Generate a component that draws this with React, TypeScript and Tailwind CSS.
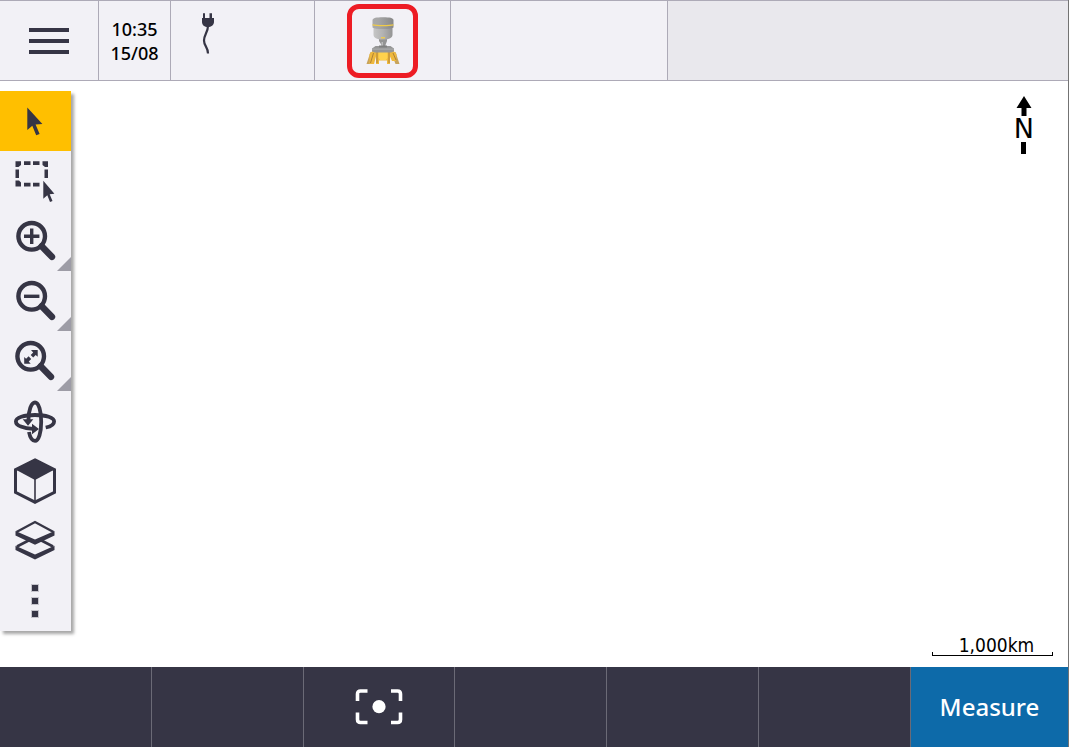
import { useState, type ReactNode } from "react";
import { clsx } from "clsx";

const INK = "#363545";

type Tool = {
  id: string;
  label: string;
  hasMore?: boolean;
  icon: ReactNode;
};

function Magnifier({ cx = 31.7, children }: { cx?: number; children: ReactNode }) {
  return (
    <>
      <circle cx={cx} cy="25.3" r="13.3" fill="none" stroke={INK} strokeWidth="4.4" />
      <path d={`M${cx + 10} 35.3L${cx + 20.2} 45.8`} stroke={INK} strokeWidth="6.6" strokeLinecap="round" />
      {children}
    </>
  );
}

const tools: Tool[] = [
  {
    id: "select",
    label: "Select",
    icon: <path d="M27.3 16.5V39L32.3 34.8L36.2 44.2L39.6 42.9L35.6 33.6L42.4 33Z" fill={INK} />,
  },
  {
    id: "rectangle",
    label: "Rectangle select",
    icon: (
      <>
        <path
          d="M15.500 10.300h5.500v3.700l-2.500 2h-3zM24 10.300h6.500v3.700H24zM33 10.300h6.500v3.700H33zM42.500 10.300h5.500v5.700h-3l-2.500-2zM15.500 18.500h3.500v8.500h-3.500zM44.500 18.500h3.500v8.500h-3.500zM15.500 29.500h3.500l2 2v4h-5.500zM24 31.800h6.500v3.700H24zM33 31.800h6.500v3.700H33z"
          fill={INK}
        />
        <path d="M43.300 29.800V47.800L47.300 44.300L50 51L52.500 50L49.700 43.200L54.400 42.800Z" fill={INK} />
      </>
    ),
  },
  {
    id: "zoom-in",
    label: "Zoom in",
    hasMore: true,
    icon: (
      <Magnifier>
        <path d="M24 25.3h15.4M31.700 17.600v15.400" stroke={INK} strokeWidth="3.4" />
      </Magnifier>
    ),
  },
  {
    id: "zoom-out",
    label: "Zoom out",
    hasMore: true,
    icon: (
      <Magnifier>
        <path d="M24 25.3h15.4" stroke={INK} strokeWidth="3.4" />
      </Magnifier>
    ),
  },
  {
    id: "zoom-extents",
    label: "Zoom to extents",
    hasMore: true,
    icon: (
      <Magnifier cx={30.7}>
        <path
          d="M31 19H37.7V25.7L35.7 24L33.2 26.5L30.7 24L33.2 21.400ZM24.200 26L26.100 27.800L28.600 25.300L31.200 27.900L28.700 30.500L30.700 32.700H24.200Z"
          fill={INK}
        />
      </Magnifier>
    ),
  },
  {
    id: "orbit",
    label: "Orbit",
    icon: (
      <>
        <path
          d="M29 41C30 46.500 32.200 49.800 35 49.800C38.700 49.800 41.200 41.500 41.200 30.700C41.200 20 38.700 11.500 35 11.500C31.300 11.500 28.400 19.500 28.400 29.500"
          fill="none"
          stroke={INK}
          strokeWidth="3.8"
        />
        <path
          d="M45.700 36.500C51 35.400 54.100 33.300 54.100 30.400C54.100 26.500 46 24 35 24C24 24 15.900 26.500 15.900 30.400C15.900 34.500 23.500 37.700 33 37.900"
          fill="none"
          stroke={INK}
          strokeWidth="3.8"
        />
        <path d="M22.700 28.300H33.300L28 34.700ZM32 32.700V43.200L39 38Z" fill={INK} />
      </>
    ),
  },
  {
    id: "cube",
    label: "3D view",
    icon: (
      <>
        <path d="M35 8.900L54.500 18.700V41.400L35 51.200L15.500 41.400V18.700Z" fill="none" stroke={INK} strokeWidth="3" />
        <path d="M35 8L55 18.300L35 29.100L15 18.300Z" fill={INK} />
        <path d="M35 28V51" stroke={INK} strokeWidth="1.6" />
      </>
    ),
  },
  {
    id: "layers",
    label: "Layer manager",
    icon: (
      <>
        <path d="M30.500 28.500L17 35.500M39.500 28.500L53 35.500" stroke={INK} strokeWidth="2.600" />
        <path d="M15.500 34.800L35 43.600L54.500 34.800V39L35 48.500L15.500 39Z" fill={INK} />
        <path d="M16.500 21L35 11L53.500 21" fill="none" stroke={INK} strokeWidth="2.400" />
        <path d="M15.500 20L35 28.400L54.500 20V24.500L35 33.700L15.500 24.500Z" fill={INK} />
      </>
    ),
  },
  {
    id: "more",
    label: "More",
    icon: (
      <path
        d="M31.500 13.500h7v7h-7zM31.500 26.500h7v7h-7zM31.500 39.500h7v7h-7z"
        fill={INK}
        stroke="#c6c5cc"
        strokeWidth="1"
      />
    ),
  },
];

function PlugIcon() {
  return (
    <svg width="14" height="42" viewBox="0 0 14 42" aria-hidden="true">
      <path d="M2 0.300h2V5h4.500V0.300H11V5H13V9C13 12 10 14 7 14C3.500 14 1 12 1 9V5h1z" fill={INK} />
      <path d="M7 13C7 19 3 22 3 27.500C3 33 7 34 7 40.500" fill="none" stroke={INK} strokeWidth="2.200" />
    </svg>
  );
}

function ReceiverIcon() {
  return (
    <svg width="34" height="48" viewBox="0 0 34 48" aria-hidden="true">
      <defs>
        <linearGradient id="metal" x1="0" x2="1">
          <stop offset="0" stopColor="#aaaaaa" />
          <stop offset="0.300" stopColor="#a6a6a6" />
          <stop offset="1" stopColor="#888888" />
        </linearGradient>
        <linearGradient id="body" x1="0" x2="1">
          <stop offset="0" stopColor="#c6c6c6" />
          <stop offset="0.500" stopColor="#b2b2b2" />
          <stop offset="1" stopColor="#949494" />
        </linearGradient>
      </defs>
      <path d="M13 21h8v3l-1.500 4v3h-4v-3L13 24z" fill="#949494" />
      <path d="M15.500 25h1.500v5h-1.500z" fill="#bcbcbc" />
      <path d="M7.500 9h19V17.500c0 3.500-3 5-9.500 5s-9.500-1.500-9.500-5z" fill="url(#body)" />
      <path d="M6.500 3C7 1 10 .3 17 .3S27 1 27.500 3v7.500c-2 1.200-5 1.500-10.500 1.500S8.500 11.700 6.500 10.500z" fill="url(#metal)" />
      <path d="M6.500 7.200C10 8.300 24 8.300 27.500 7.200v1.200C24 9.400 10 9.400 6.500 8.400z" fill="#f0cb48" />
      <path d="M15 20h4v1.500h-4z" fill="#e9c955" />
      <path d="M4.500 35L.5 47h3.300L9 35.500zM29.500 35l4 12h-4L25 35.500z" fill="#c8a45c" />
      <path d="M3.500 37l3-3h21l3 3-.5 7h-4L24 39.500V47h-3v-3.500h-8V47H10v-7.500L8 47H3.500z" fill="#efb93d" />
      <path d="M12.500 34.500h9V41l-1.500 2h-6l-1.500-2z" fill="#ffd24c" />
      <path d="M7.500 36L4.500 46M11 35v11M23 35v11M27 36l3 7" stroke="#ad8038" strokeWidth="1" />
      <path d="M6 31.500L9.500 29h15l3.500 2.500v3L25 35.500H9l-3-1z" fill="#969696" />
      <path d="M6 31.500h22v1.300H6z" fill="#a8a8a8" />
      <path d="M13 28.500h8v2h-8z" fill="#808080" />
    </svg>
  );
}

function StatusBar() {
  return (
    <header className="flex h-[81px] border-y border-[#adaab7] bg-[#f2f1f6]">
      <button type="button" aria-label="Menu" className="flex w-[99px] items-center justify-center border-r border-[#adaab7]">
        <span className="flex flex-col gap-[7px]">
          <span className="h-1 w-10 bg-[#363545]" />
          <span className="h-1 w-10 bg-[#363545]" />
          <span className="h-1 w-10 bg-[#363545]" />
        </span>
      </button>
      <div className="flex w-[72px] flex-col items-center justify-center border-r border-[#adaab7] text-lg leading-6 font-medium text-black">
        <time>10:35</time>
        <time>15/08</time>
      </div>
      <button type="button" aria-label="Power" className="flex w-36 items-start border-r border-[#adaab7] px-[30px] pt-3">
        <PlugIcon />
      </button>
      <button type="button" aria-label="Receiver" className="flex w-[136px] items-center justify-center border-r border-[#adaab7]">
        <span className="flex h-[74px] w-[71px] items-center justify-center rounded-xl border-[5px] border-[#ed1c24]">
          <ReceiverIcon />
        </span>
      </button>
      <div className="w-[217px] border-r border-[#adaab7]" />
      <div className="flex-1 bg-[#e9e8ed]" />
    </header>
  );
}

function Toolbar() {
  const [active, setActive] = useState("select");

  return (
    <nav aria-label="Map tools" className="mt-[10px] flex w-[71px] flex-col self-start bg-[#f2f1f6] shadow-[3px_3px_3px_rgba(0,0,0,0.35)]">
      {tools.map((tool) => (
        <button
          key={tool.id}
          type="button"
          aria-label={tool.label}
          aria-pressed={active === tool.id}
          onClick={() => setActive(tool.id)}
          className={clsx("h-[60px] w-full", active === tool.id && "bg-[#ffbf00]")}
        >
          <svg width="71" height="60" viewBox="0 0 71 60" aria-hidden="true">
            {tool.icon}
            {tool.hasMore && <path d="M57 60L71 46V60Z" fill="#9d9ca6" />}
          </svg>
        </button>
      ))}
    </nav>
  );
}

function NorthArrow() {
  return (
    <div className="mt-[15px] mr-[34px] flex flex-col items-center text-black">
      <svg width="16" height="20" viewBox="0 0 16 20" aria-hidden="true">
        <path d="M8 0L15.5 12H10.5V20H5.5V12H.5Z" />
      </svg>
      <span className="font-['DejaVu_Sans',sans-serif] text-[27px] leading-[26px]">N</span>
      <span className="h-3 w-[5px] bg-black" />
    </div>
  );
}

function ScaleBar() {
  return (
    <div className="mr-[15px] mb-[11px] flex w-[121px] flex-col">
      <span className="pl-2 text-center font-['DejaVu_Sans_Condensed','DejaVu_Sans',sans-serif] text-[19px] leading-[22px] text-black">
        1,000km
      </span>
      <span className="-mt-1 h-1 border-x border-b border-black" />
    </div>
  );
}

function SoftkeyBar() {
  return (
    <footer className="flex h-20 bg-[#363545]">
      {["f1", "f2", "snap", "f4", "f5", "f6"].map((key) => (
        <button
          key={key}
          type="button"
          aria-label={key === "snap" ? "Snap to center" : key}
          className="flex flex-1 items-center justify-center border-r border-[#6b6a76]"
        >
          {key === "snap" && (
            <svg width="48" height="36" viewBox="0 0 48 36" fill="none" aria-hidden="true">
              <path
                d="M2.500 12V5Q2.500 2 5.500 2H12.500M36 2H42.500Q45.500 2 45.500 5V12M45.500 23.500V30.500Q45.500 33.500 42.500 33.500H36M12.500 33.500H5.500Q2.500 33.500 2.500 30.500V23.500"
                stroke="#fff"
                strokeWidth="3.600"
              />
              <circle cx="24" cy="17.700" r="6.600" fill="#fff" />
            </svg>
          )}
        </button>
      ))}
      <button type="button" className="w-[157px] bg-[#0d6aa9] text-2xl font-medium text-white">
        Measure
      </button>
    </footer>
  );
}

export default function App() {
  return (
    <div className="flex min-h-screen flex-col border-r border-[#737373] bg-white font-['Noto_Sans','Open_Sans',sans-serif]">
      <StatusBar />
      <main className="flex flex-1 justify-between">
        <Toolbar />
        <div className="flex flex-col items-end justify-between">
          <NorthArrow />
          <ScaleBar />
        </div>
      </main>
      <SoftkeyBar />
    </div>
  );
}
